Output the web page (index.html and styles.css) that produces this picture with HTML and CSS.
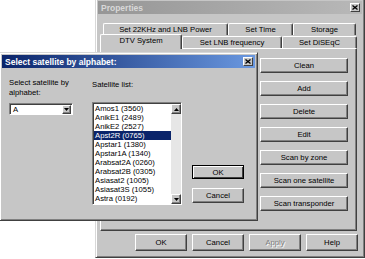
FILE: index.html
```html
<html>
  <head>
    <meta http-equiv="Content-Type" content="text/html; charset=utf-8" />
    <title>Properties</title>
    <link rel="stylesheet" href="styles.css">
  </head>
  <body>
    <div class="win props">
      <div class="title inactive">
        <span>Properties</span>
        <div class="xbtn"><svg width="6" height="5" viewBox="0 0 6 5"><path d="M0.5 0.5 L5.5 4.5 M5.5 0.5 L0.5 4.5" stroke="#000" stroke-width="1.3"/></svg></div>
      </div>
      <div class="tabrow back">
        <div class="tab t-22k">Set 22KHz and LNB Power</div>
        <div class="tab t-time">Set Time</div>
        <div class="tab t-store">Storage</div>
      </div>
      <div class="tabrow front">
        <div class="tab t-dtv sel">DTV System</div>
        <div class="tab t-lnb">Set LNB frequency</div>
        <div class="tab t-diseqc">Set DiSEqC</div>
      </div>
      <div class="panel">
        <div class="btn pbtn">Clean</div>
        <div class="btn pbtn">Add</div>
        <div class="btn pbtn">Delete</div>
        <div class="btn pbtn">Edit</div>
        <div class="btn pbtn">Scan by zone</div>
        <div class="btn pbtn">Scan one satellite</div>
        <div class="btn pbtn">Scan transponder</div>
      </div>
      <div class="foot">
        <div class="btn fbtn">OK</div>
        <div class="btn fbtn">Cancel</div>
        <div class="btn fbtn off">Apply</div>
        <div class="btn fbtn">Help</div>
      </div>
    </div>

    <div class="win dlg">
      <div class="title active">
        <span>Select satellite by alphabet:</span>
        <div class="xbtn"><svg width="6" height="5" viewBox="0 0 6 5"><path d="M0.5 0.5 L5.5 4.5 M5.5 0.5 L0.5 4.5" stroke="#000" stroke-width="1.3"/></svg></div>
      </div>
      <div class="dbody">
        <div class="col1">
          <div class="lbl">Select satellite by alphabet:</div>
          <div class="combo">
            <span class="val">A</span>
            <div class="btn arr"><svg width="5" height="3" viewBox="0 0 5 3"><polygon points="0,0 5,0 2.5,3" fill="#000"/></svg></div>
          </div>
        </div>
        <div class="col2">
          <div class="lbl lbl2">Satellite list:</div>
          <div class="list">
            <div class="items">
              <div class="item">Amos1 (3560)</div>
              <div class="item">AnikE1 (2489)</div>
              <div class="item">AnikE2 (2527)</div>
              <div class="item sel">Apst2R (0765)</div>
              <div class="item">Apstar1 (1380)</div>
              <div class="item">Apstar1A (1340)</div>
              <div class="item">Arabsat2A (0260)</div>
              <div class="item">Arabsat2B (0305)</div>
              <div class="item">Asiasat2 (1005)</div>
              <div class="item">Asiasat3S (1055)</div>
              <div class="item">Astra (0192)</div>
            </div>
            <div class="sb">
              <div class="btn sbb"><svg width="5" height="3" viewBox="0 0 5 3"><polygon points="0,3 5,3 2.5,0" fill="#000"/></svg></div>
              <div class="track"></div>
              <div class="btn sbb"><svg width="5" height="3" viewBox="0 0 5 3"><polygon points="0,0 5,0 2.5,3" fill="#000"/></svg></div>
            </div>
          </div>
        </div>
        <div class="col3">
          <div class="btn dbtn def">OK</div>
          <div class="btn dbtn">Cancel</div>
        </div>
      </div>
    </div>
  </body>
</html>
```

FILE: styles.css
```css
body {
     margin: 0;
     background: #fff;
     font-family: "Liberation Sans", Arial, sans-serif;
     font-size: 7.7px;
     color: #000;
     overflow: hidden;
}

.win {
     position: absolute;
     box-sizing: border-box;
     background: #c6c6c6;
     border: 1px solid;
     border-color: #d8d8d8 #404040 #404040 #d8d8d8;
     box-shadow: inset 1px 1px #fff, inset -1px -1px #808080;
     padding: 2px;
     display: flex;
     flex-direction: column;
}
.props {
     left: 95px;
     top: -2px;
     width: 270px;
     height: 260px;
}
.dlg {
     left: -1px;
     top: 52px;
     width: 259px;
     height: 169px;
}

/* title bars */
.title {
     height: 13px;
     flex: none;
     display: flex;
     align-items: center;
     justify-content: space-between;
     padding: 0 2px 0 3px;
     font-weight: bold;
     font-size: 8.5px;
}
.title.active {
     background: linear-gradient(to right, #0a246a, #6a98e0);
     color: #fff;
}
.title.inactive {
     background: linear-gradient(to right, #969696, #b8b8b8);
     color: #d8d8d8;
}
.xbtn {
     width: 10px;
     height: 9px;
     box-sizing: border-box;
     background: #c6c6c6;
     border: 1px solid;
     border-color: #fff #404040 #404040 #fff;
     display: flex;
     align-items: center;
     justify-content: center;
}

/* buttons */
.btn {
     box-sizing: border-box;
     background: #c6c6c6;
     border: 1px solid;
     border-color: #fff #404040 #404040 #fff;
     box-shadow: inset -1px -1px #808080;
     display: flex;
     align-items: center;
     justify-content: center;
     white-space: nowrap;
}
.off {
     color: #808080;
     text-shadow: 1px 1px #fff;
}

/* tabs */
.tabrow {
     display: flex;
     flex: none;
}
.back {
     margin: 9px 0 0 5px;
     height: 12px;
}
.front {
     margin-left: 2px;
     height: 13px;
     align-items: flex-start;
}
.tab {
     box-sizing: border-box;
     height: 12px;
     border: 1px solid;
     border-bottom: none;
     border-color: #fff #404040 #fff #fff;
     border-radius: 2px 2px 0 0;
     box-shadow: inset -1px 0 #808080;
     text-align: center;
     line-height: 11px;
     background: #c6c6c6;
}
.front .tab {
     margin-top: 1px;
}
.front .tab.sel {
     position: relative;
     z-index: 1;
     margin-top: -1px;
     height: 15px;
     line-height: 12px;
}
.t-22k { width: 125px; }
.t-time { width: 65px; }
.t-store { width: 63px; }
.t-dtv { width: 82px; }
.t-lnb { width: 100px; }
.t-diseqc { width: 75px; }

.panel {
     flex: none;
     height: 183px;
     margin: 0 5px 0 2px;
     box-sizing: border-box;
     border: 1px solid;
     border-color: #fff #404040 #404040 #fff;
     box-shadow: inset -1px -1px #808080;
     display: flex;
     flex-direction: column;
     align-items: flex-end;
     gap: 8px;
     padding: 9px 8px 0 0;
}
.pbtn {
     width: 88px;
     height: 15px;
}

.foot {
     display: flex;
     justify-content: flex-end;
     gap: 5px;
     margin: 3px 4px 0 0;
}
.fbtn {
     width: 52px;
     height: 17px;
}

/* satellite dialog */
.dbody {
     display: flex;
     padding: 10px 0 0 7px;
}
.col1 {
     width: 64px;
     margin-right: 19px;
}
.col2 {
     width: 90px;
     margin-right: 10px;
}
.col3 {
     width: 52px;
     display: flex;
     flex-direction: column;
     justify-content: flex-end;
     gap: 9px;
     padding-bottom: 2px;
}
.lbl {
     line-height: 10px;
}
.lbl2 {
     margin-top: 2px;
}
.combo {
     margin-top: 5px;
     height: 12px;
     box-sizing: border-box;
     background: #fff;
     border: 1px solid;
     border-color: #808080 #fff #fff #808080;
     box-shadow: inset 1px 1px #404040;
     padding: 1px 1px 0 1px;
     display: flex;
}
.combo .val {
     flex: 1;
     padding-left: 2px;
     line-height: 9px;
}
.arr {
     width: 9px;
     height: 9px;
}
.list {
     margin-top: 12px;
     height: 103px;
     box-sizing: border-box;
     background: #fff;
     border: 1px solid;
     border-color: #808080 #fff #fff #808080;
     box-shadow: inset 1px 1px #404040;
     padding: 1px 0 0 1px;
     display: flex;
}
.items {
     flex: 1;
     overflow: hidden;
}
.item {
     height: 9px;
     line-height: 9px;
     padding-left: 1px;
     white-space: nowrap;
}
.item.sel {
     background: #0a246a;
     color: #fff;
}
.sb {
     width: 10px;
     display: flex;
     flex-direction: column;
}
.sbb {
     height: 10px;
     flex: none;
}
.track {
     flex: 1;
     background: #e6e6e6;
}
.dbtn {
     height: 15px;
}
.def {
     height: 14px;
     border-color: #000;
     box-shadow: inset 1px 1px #fff, inset -1px -1px #404040;
}
```
